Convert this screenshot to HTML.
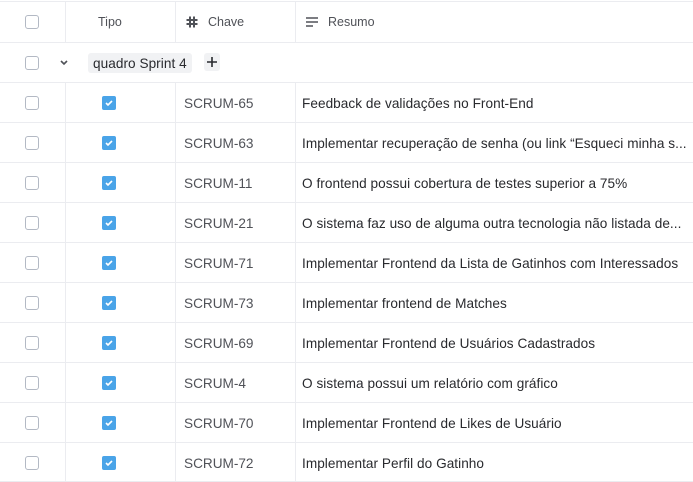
<!DOCTYPE html>
<html><head><style>
*{margin:0;padding:0;box-sizing:border-box}
body{width:693px;height:482px;overflow:hidden;background:#fff;font-family:"Liberation Sans",sans-serif;position:relative}
.hl{position:absolute;left:0;width:693px;height:1px;background:#ebecf0}
.vl{position:absolute;width:1px;background:#ebecf0}
.cb{position:absolute;left:25px;width:14px;height:14px;border:1.5px solid #b3b9c4;border-radius:3px;background:#fff}
.tk{position:absolute;left:102px;width:14px;height:14px;background:#4aa4e8;border-radius:2px}
.tk svg{position:absolute;left:2px;top:2px}
.t{position:absolute;font-size:13.6px;color:#292a2e;white-space:nowrap;letter-spacing:0.05px}
.k{position:absolute;left:184px;font-size:13.6px;color:#505258}
.h{position:absolute;top:15px;font-size:12.5px;color:#505258}
</style></head><body>
<div class="hl" style="top:1px"></div>
<div class="hl" style="top:42px"></div>
<div class="vl" style="left:65px;top:1px;height:41px"></div>
<div class="vl" style="left:175px;top:1px;height:41px"></div>
<div class="vl" style="left:295px;top:1px;height:41px"></div>
<div class="cb" style="top:15px"></div>
<div class="h" style="left:98px">Tipo</div>
<svg style="position:absolute;left:186px;top:16px" width="12" height="12" viewBox="0 0 12 12"><path d="M4 0.5v11M8 0.5v11M0.5 4h11M0.5 8h11" stroke="#505258" stroke-width="2"/></svg>
<div class="h" style="left:208px">Chave</div>
<svg style="position:absolute;left:306px;top:17px" width="12" height="10" viewBox="0 0 12 10"><path d="M0 1h12M0 5h12M0 9h7" stroke="#505258" stroke-width="1.5"/></svg>
<div class="h" style="left:328px">Resumo</div>
<div class="cb" style="top:56px"></div>
<svg style="position:absolute;left:60px;top:60px" width="8" height="6" viewBox="0 0 8 6"><path d="M1 1l3 3 3-3" stroke="#505258" stroke-width="1.6" fill="none"/></svg>
<div style="position:absolute;left:88px;top:53px;width:104px;height:20px;background:#f1f2f4;border-radius:3px"></div>
<div class="t" style="left:93px;top:56px">quadro Sprint 4</div>
<div style="position:absolute;left:204px;top:53px;width:16px;height:18px;background:#f1f2f4;border-radius:3px"></div>
<svg style="position:absolute;left:207px;top:57px" width="10" height="10" viewBox="0 0 10 10"><path d="M5 0v10M0 5h10" stroke="#292a2e" stroke-width="1.6"/></svg>
<div class="hl" style="top:82px"></div>
<div class="vl" style="left:65px;top:82px;height:400px"></div>
<div class="vl" style="left:175px;top:82px;height:400px"></div>
<div class="vl" style="left:295px;top:82px;height:400px"></div>

<div class="cb" style="top:96px"></div><div class="tk" style="top:96px"><svg width="10" height="10"><path d="M2 5l2 2 4-4" stroke="#fff" stroke-width="1.6" fill="none"/></svg></div><div class="k" style="top:96px">SCRUM-65</div><div class="t" style="left:302px;top:96px">Feedback de validações no Front-End</div><div class="hl" style="top:122px"></div>
<div class="cb" style="top:136px"></div><div class="tk" style="top:136px"><svg width="10" height="10"><path d="M2 5l2 2 4-4" stroke="#fff" stroke-width="1.6" fill="none"/></svg></div><div class="k" style="top:136px">SCRUM-63</div><div class="t" style="left:302px;top:136px">Implementar recuperação de senha (ou link “Esqueci minha s...</div><div class="hl" style="top:162px"></div>
<div class="cb" style="top:176px"></div><div class="tk" style="top:176px"><svg width="10" height="10"><path d="M2 5l2 2 4-4" stroke="#fff" stroke-width="1.6" fill="none"/></svg></div><div class="k" style="top:176px">SCRUM-11</div><div class="t" style="left:302px;top:176px">O frontend possui cobertura de testes superior a 75%</div><div class="hl" style="top:202px"></div>
<div class="cb" style="top:216px"></div><div class="tk" style="top:216px"><svg width="10" height="10"><path d="M2 5l2 2 4-4" stroke="#fff" stroke-width="1.6" fill="none"/></svg></div><div class="k" style="top:216px">SCRUM-21</div><div class="t" style="left:302px;top:216px">O sistema faz uso de alguma outra tecnologia não listada de...</div><div class="hl" style="top:242px"></div>
<div class="cb" style="top:256px"></div><div class="tk" style="top:256px"><svg width="10" height="10"><path d="M2 5l2 2 4-4" stroke="#fff" stroke-width="1.6" fill="none"/></svg></div><div class="k" style="top:256px">SCRUM-71</div><div class="t" style="left:302px;top:256px">Implementar Frontend da Lista de Gatinhos com Interessados</div><div class="hl" style="top:282px"></div>
<div class="cb" style="top:296px"></div><div class="tk" style="top:296px"><svg width="10" height="10"><path d="M2 5l2 2 4-4" stroke="#fff" stroke-width="1.6" fill="none"/></svg></div><div class="k" style="top:296px">SCRUM-73</div><div class="t" style="left:302px;top:296px">Implementar frontend de Matches</div><div class="hl" style="top:322px"></div>
<div class="cb" style="top:336px"></div><div class="tk" style="top:336px"><svg width="10" height="10"><path d="M2 5l2 2 4-4" stroke="#fff" stroke-width="1.6" fill="none"/></svg></div><div class="k" style="top:336px">SCRUM-69</div><div class="t" style="left:302px;top:336px">Implementar Frontend de Usuários Cadastrados</div><div class="hl" style="top:362px"></div>
<div class="cb" style="top:376px"></div><div class="tk" style="top:376px"><svg width="10" height="10"><path d="M2 5l2 2 4-4" stroke="#fff" stroke-width="1.6" fill="none"/></svg></div><div class="k" style="top:376px">SCRUM-4</div><div class="t" style="left:302px;top:376px">O sistema possui um relatório com gráfico</div><div class="hl" style="top:402px"></div>
<div class="cb" style="top:416px"></div><div class="tk" style="top:416px"><svg width="10" height="10"><path d="M2 5l2 2 4-4" stroke="#fff" stroke-width="1.6" fill="none"/></svg></div><div class="k" style="top:416px">SCRUM-70</div><div class="t" style="left:302px;top:416px">Implementar Frontend de Likes de Usuário</div><div class="hl" style="top:442px"></div>
<div class="cb" style="top:456px"></div><div class="tk" style="top:456px"><svg width="10" height="10"><path d="M2 5l2 2 4-4" stroke="#fff" stroke-width="1.6" fill="none"/></svg></div><div class="k" style="top:456px">SCRUM-72</div><div class="t" style="left:302px;top:456px">Implementar Perfil do Gatinho</div><div class="hl" style="top:481px"></div>
</body></html>
